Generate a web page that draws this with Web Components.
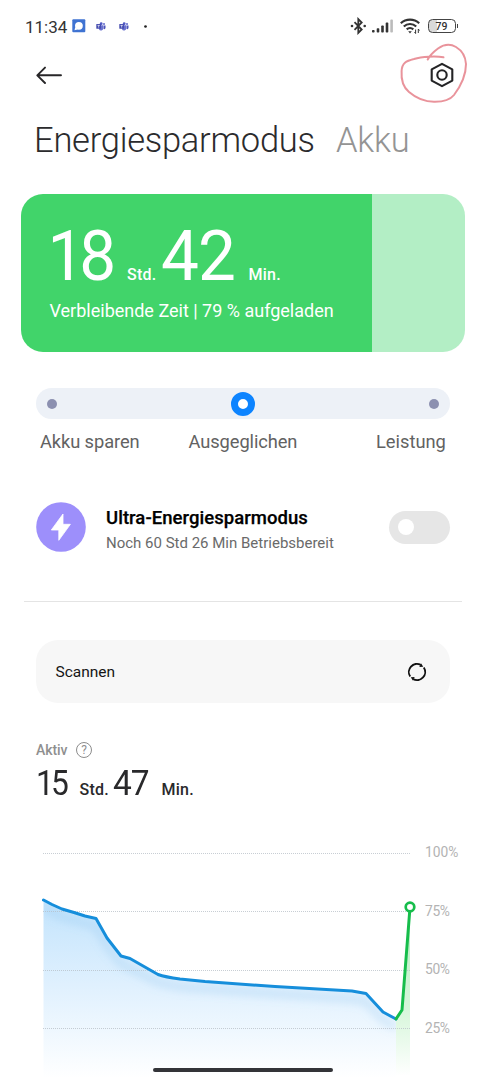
<!DOCTYPE html>
<html lang="de">
<head>
<meta charset="utf-8">
<title>Energiesparmodus</title>
<style>
html,body{margin:0;padding:0;background:#fff}
body{font-family:Roboto,"Noto Sans",sans-serif;color:#2b2b2d;width:486px;height:1080px;overflow:hidden}
</style>
</head>
<body>
<battery-screen></battery-screen>
<script>
const define = (name, html, setup) => customElements.define(name, class extends HTMLElement {
  constructor() {
    super();
    this.attachShadow({ mode: 'open' }).innerHTML = html;
  }
  connectedCallback() { if (setup) setup(this, this.shadowRoot); }
});

/* One line of text, tracked so that it spans the number of pixels in "w". */
define('fit-text', `<style>
:host{display:block;white-space:nowrap;flex:none}
span{display:inline-block;white-space:nowrap}
</style><span><slot></slot></span>`, (el, root) => {
  const w = +el.getAttribute('w'), s = root.querySelector('span');
  const n = el.textContent.length;
  el.style.width = w + 'px';
  s.style.letterSpacing = ((w - s.offsetWidth) / n) + 'px';
});

define('teams-icon', `<style>:host{display:block;flex:none}svg{display:block}</style>
<svg width="10" height="9" viewBox="0 0 10 9"><circle cx="5.200" cy="1.700" r="1.4" fill="#5059c4"/><circle cx="8" cy="2" r="1" fill="#6069cc"/><path d="M3 3.200h4.200v3a2.200 2.200 0 0 1-4.200 1z" fill="#6b72cf"/><path d="M7.500 3.500h2v2.200a1.500 1.500 0 0 1-2 1.300z" fill="#4c54b8"/><rect x=".3" y="2" width="4.700" height="4.700" rx=".5" fill="#454cb0"/><path d="M1.500 3.400h2.300M2.650 3.400v2.200" stroke="#fff" stroke-width=".65"/></svg>`);

define('status-bar', `<style>
:host{display:flex;height:52px;box-sizing:border-box;padding:0 28px 0 25px;align-items:center;color:#333}
.l,.r{display:flex;align-items:center}
.l{flex:1}
fit-text{font-size:17px;line-height:20px;padding-top:1px}
svg{display:block;flex:none}
.bat{box-sizing:border-box;width:28px;height:14px;border:1.3px solid #444;border-radius:4.5px;background:linear-gradient(90deg,#d9d9d9 0 32%,#fff 32%);font-size:10.500px;font-weight:500;line-height:13px;text-align:center}
.nub{width:1.5px;height:4px;background:#444;margin-left:1px}
</style>
<div class="l"><fit-text w="42">11:34</fit-text>
<svg width="14" height="14" viewBox="0 0 14 14" style="margin-left:5px"><rect x=".3" y=".3" width="13" height="13" rx="1" fill="#3f73d2"/><path d="M2.500 11.200l.7-3 2.300 2.200z" fill="#fff"/><circle cx="6.900" cy="6.800" r="3.900" fill="#fff"/></svg>
<teams-icon style="margin-left:10px"></teams-icon><teams-icon style="margin-left:13px"></teams-icon>
<svg width="3" height="3" viewBox="0 0 3 3" style="margin-left:15px"><circle cx="1.500" cy="1.500" r="1.350" fill="#222"/></svg>
</div>
<div class="r">
<svg width="17" height="18" viewBox="0 0 17 18"><path d="M4.500 5.200l7.200 7.300-3.400 3.400V2.100l3.400 3.400-7.200 7.300" fill="none" stroke="#333" stroke-width="1.800"/><circle cx="2" cy="9" r="1.300" fill="#333"/><circle cx="14.700" cy="9" r="1.300" fill="#333"/></svg>
<svg width="22" height="14" viewBox="0 0 22 14" style="margin-left:5px"><g fill="#333"><rect x="0" y="11" width="2.600" height="2.500" rx=".8"/><rect x="4.700" y="9.200" width="2.600" height="4.300" rx=".8"/><rect x="9.200" y="6.500" width="2.600" height="7" rx=".8"/><rect x="13.700" y="3.600" width="2.600" height="9.900" rx=".8"/></g><rect x="18.300" y=".6" width="2.600" height="12.900" rx=".8" fill="#bbb"/></svg>
<svg width="21" height="16" viewBox="0 0 21 16" style="margin-left:6px"><g fill="none" stroke="#333" stroke-width="2.200"><path d="M.8 5.200a13.500 13.500 0 0 1 18.400 0"/><path d="M3.800 8.500a9 9 0 0 1 12.400 0"/><path d="M6.700 11.400a5 5 0 0 1 6.600 0"/></g><path d="M8.200 13.200h3.600L10 15.500z" fill="#333"/><path d="M15.600 11.500v4M18.300 11v4M14.500 14l1.100 1.500M18.300 11l1.200 1.500" stroke="#333" stroke-width="1"/></svg>
<div class="bat" style="margin-left:7px">79</div><div class="nub"></div>
</div>`);

define('top-bar', `<style>
:host{display:flex;height:46px;box-sizing:border-box;padding:0 31px 0 36px;align-items:center;justify-content:space-between;position:relative}
svg{display:block}
.mark{position:absolute;left:396px;top:-12px}
</style>
<svg width="26" height="18" viewBox="0 0 26 18"><path d="M25 9.300H1.500M9 1.600L1.300 9.300 9 17" fill="none" stroke="#272628" stroke-width="1.900" stroke-linecap="round" stroke-linejoin="round"/></svg>
<svg width="26" height="26" viewBox="0 0 26 26"><path d="M13 1.900l10.300 5.500v11.200L13 24.100 2.700 18.600V7.400z" fill="none" stroke="#242426" stroke-width="2.100" stroke-linejoin="round"/><circle cx="13" cy="13" r="4.700" fill="none" stroke="#242426" stroke-width="2.100"/></svg>
<svg class="mark" width="76" height="68" viewBox="396 40 76 68"><path d="M443.500 57.300C436 56 422 56.500 414 59C406 61 402 63 401.600 71C401 80 403 87 409 92C416 98 424 102 435 101.700C444 101.700 450 100 454 95C460 87 466 76 466 64C465.500 56 461 50 456 47C449 43 443 45 438 48.500C434 51.500 430 55 427.700 59.500" fill="none" stroke="#df606b" stroke-opacity=".68" stroke-width="2" stroke-linecap="round"/></svg>`);

define('page-tabs', `<style>
:host{display:flex;height:83px;padding:0 34px;font-weight:300;font-size:34.500px;line-height:84px}
.o{color:#949494;margin-left:21px}
</style><fit-text w="281">Energiesparmodus</fit-text><fit-text class="o" w="73">Akku</fit-text>`);

define('charge-card', `<style>
:host{display:block;box-sizing:border-box;width:444.500px;height:158px;margin:13px 0 0 20.500px;border-radius:22px;background:linear-gradient(90deg,#41d46a 0 351.500px,#b3eec5 351.500px);color:#fff;padding:21px 0 0 29px}
.row{display:flex;align-items:baseline;height:82px;line-height:82px}
.n{font-size:71px;transform-origin:0 50%}
.u{font-size:16px;font-weight:500}
.s{font-size:18px;line-height:28px}
</style><div class="row"><fit-text class="n" w="69" style="transform:translateX(-2.600px) scaleX(.925)">18</fit-text><fit-text class="u" w="29" style="margin-left:8.500px">Std.</fit-text><fit-text class="n" w="78" style="margin-left:4px;transform:translateX(1px) scaleX(.95)">42</fit-text><fit-text class="u" w="32" style="margin-left:10.500px">Min.</fit-text></div>
<fit-text class="s" w="284">Verbleibende Zeit | 79 % aufgeladen</fit-text>`);

define('mode-slider', `<style>
:host{display:block;margin:36px 36px 0}
.track{height:31px;border-radius:16px;background:#edf1f7;display:flex;align-items:center;justify-content:space-between;padding:0 11px}
i{width:10px;height:10px;border-radius:50%;background:#8c90b0}
b{box-sizing:border-box;width:24px;height:24px;border-radius:50%;border:7px solid #0d84ff;background:#fff}
.labels{display:flex;justify-content:space-between;padding:0 4px;font-size:18.300px;line-height:24px;margin-top:11px;color:#626262}
</style><div class="track"><i></i><b></b><i></i></div>
<div class="labels"><fit-text w="100">Akku sparen</fit-text><fit-text w="109" style="margin-left:-30px">Ausgeglichen</fit-text><fit-text w="70">Leistung</fit-text></div>`);

define('ultra-mode', `<style>
:host{display:flex;align-items:center;height:50px;margin:48px 36px 0}
.t{flex:1;margin-left:20px;padding-top:5px}
.a{font-size:18.500px;line-height:24px;font-weight:500;color:#000;-webkit-text-stroke:.25px #000}
.b{font-size:15px;line-height:20px;color:#6a6a6a;margin-top:3px}
.sw{width:61px;height:33px;border-radius:17px;background:#e6e6e6;display:flex;align-items:center;box-sizing:border-box;padding-left:9px}
.sw i{width:16px;height:16px;border-radius:50%;background:#fff}
</style><svg width="50" height="50" viewBox="0 0 50 50"><circle cx="25" cy="25" r="24.800" fill="#9d8ffb"/><path d="M27 12L15.300 28h7.500v10.300L34.400 22.300h-7.400z" fill="#fff" stroke="#fff" stroke-width=".8" stroke-linejoin="round"/></svg>
<div class="t"><fit-text class="a" w="202">Ultra-Energiesparmodus</fit-text><fit-text class="b" w="228">Noch 60 Std 26 Min Betriebsbereit</fit-text></div><div class="sw"><i></i></div>`);

define('scan-row', `<style>
:host{display:flex;align-items:center;justify-content:space-between;height:63px;margin:38px 36px 0;border-radius:22px;background:#f7f7f7;padding:0 23px 0 19.500px;color:#151515;font-size:15.500px}
</style><fit-text w="60">Scannen</fit-text>
<svg width="20" height="20" viewBox="0 0 20 20"><g fill="none" stroke="#111" stroke-width="1.900"><path d="M3.200 14.500A8.100 8.100 0 0 1 13.800 2.900"/><path d="M16.800 5.500A8.100 8.100 0 0 1 6.200 17.100"/></g><path d="M12.300 4.900l3.900-.2-2-3.300zM7.700 15.100l-3.900.2 2 3.300z" fill="#111"/></svg>`);

define('active-time', `<style>
:host{display:block;margin:37px 36px 0}
.h{display:flex;align-items:center;height:20px;color:#8f8f8f}
.h fit-text{font-size:14px;font-weight:500}
.q{box-sizing:border-box;width:16px;height:16px;border:1.200px solid #8c8c8c;border-radius:50%;font-size:12px;line-height:14.500px;text-align:center;margin-left:8.500px}
.row{display:flex;align-items:baseline;line-height:46px;height:46px;color:#29292b}
.n{font-size:34.500px;transform-origin:0 50%}
.u{font-size:16px;font-weight:500}
</style><div class="h"><fit-text w="31.500">Aktiv</fit-text><div class="q">?</div></div>
<div class="row"><fit-text class="n" w="33" style="transform:scaleX(.92)">15</fit-text><fit-text class="u" w="29" style="margin-left:10.500px">Std.</fit-text><fit-text class="n" w="37" style="margin-left:4.500px;transform:scaleX(.97)">47</fit-text><fit-text class="u" w="32" style="margin-left:11.500px">Min.</fit-text></div>`);

define('battery-chart', `<style>
:host{display:flex;margin:37px 0 0;height:237px}
svg{display:block;flex:none}
.y{display:flex;flex-direction:column;padding-left:5px;font-size:13.800px;color:#b3b3b3;margin-top:-1px}
.y fit-text{line-height:20px;margin-bottom:38.500px}
</style><svg width="420" height="237" viewBox="0 843 420 237">
<defs><linearGradient id="b" gradientUnits="userSpaceOnUse" x1="0" y1="890" x2="0" y2="1078"><stop offset="0" stop-color="#bfe2fc"/><stop offset=".5" stop-color="#dff0fe"/><stop offset="1" stop-color="#fff"/></linearGradient>
<linearGradient id="g" gradientUnits="userSpaceOnUse" x1="0" y1="907" x2="0" y2="1076"><stop offset="0" stop-color="#b5edc1"/><stop offset=".6" stop-color="#d6f6da"/><stop offset="1" stop-color="#fff"/></linearGradient>
<clipPath id="c"><path d="M43.500 900L62 909 85 916 96 918.500 107 938 121 956 130 958.500 158 974.500 180 979 250 984 352 991 366 993.500 383 1012 396 1019V1080H43.500z"/></clipPath>
<filter id="f" x="-10%" y="-20%" width="120%" height="150%"><feGaussianBlur stdDeviation="4"/></filter></defs>
<path d="M43.500 900L52 904.500 62 909 74 912.500 85 916 96 918.500 107 938 121 956 130 958.500 158 974.500Q165 977 180 979L205 981.500 275 986.500 352 991 366 993.500 383 1012 396 1019V1080H43.500z" fill="url(#b)"/>
<g clip-path="url(#c)"><path transform="translate(0 8)" d="M43.500 900L62 909 96 918.500 107 938 121 956 158 974.500 180 979 250 984 352 991 366 993.500 383 1012 396 1019" fill="none" stroke="#7db9e8" stroke-opacity=".28" stroke-width="7" filter="url(#f)"/></g>
<path d="M396 1019L402 1010 410 907V1080H396z" fill="url(#g)"/>
<path d="M43 853.500H411M43 911.500H411M43 970.500H411M43 1028.500H411" stroke="#b5bec5" stroke-opacity=".75" stroke-dasharray="1 1" fill="none"/>
<path d="M43.500 900L52 904.500 62 909 74 912.500 85 916 96 918.500 107 938 121 956 130 958.500 158 974.500Q165 977 180 979L205 981.500 275 986.500 352 991 366 993.500 383 1012 396 1019" fill="none" stroke="#168edb" stroke-width="3" stroke-linejoin="round" stroke-linecap="round"/>
<path d="M396 1019L402 1010 409.800 910" fill="none" stroke="#16bd4b" stroke-width="3" stroke-linejoin="round" stroke-linecap="round"/><circle cx="410" cy="907" r="4.300" fill="#fff" stroke="#16bd4b" stroke-width="2.700"/></svg>
<div class="y"><fit-text w="33">100%</fit-text><fit-text w="25">75%</fit-text><fit-text w="25">50%</fit-text><fit-text w="25">25%</fit-text></div>`);

define('battery-screen', `<style>
:host{display:block;position:relative;width:486px;height:1080px;overflow:hidden;background:#fff}
hr{border:0;height:1px;background:#e4e4e4;margin:49px 24px 0}
.home{position:absolute;left:153px;top:1068px;width:180px;height:4px;border-radius:2px;background:#333438}
</style><status-bar></status-bar><top-bar></top-bar><page-tabs></page-tabs><charge-card></charge-card><mode-slider></mode-slider><ultra-mode></ultra-mode><hr><scan-row></scan-row><active-time></active-time><battery-chart></battery-chart><div class="home"></div>`);
</script>
</body>
</html>
